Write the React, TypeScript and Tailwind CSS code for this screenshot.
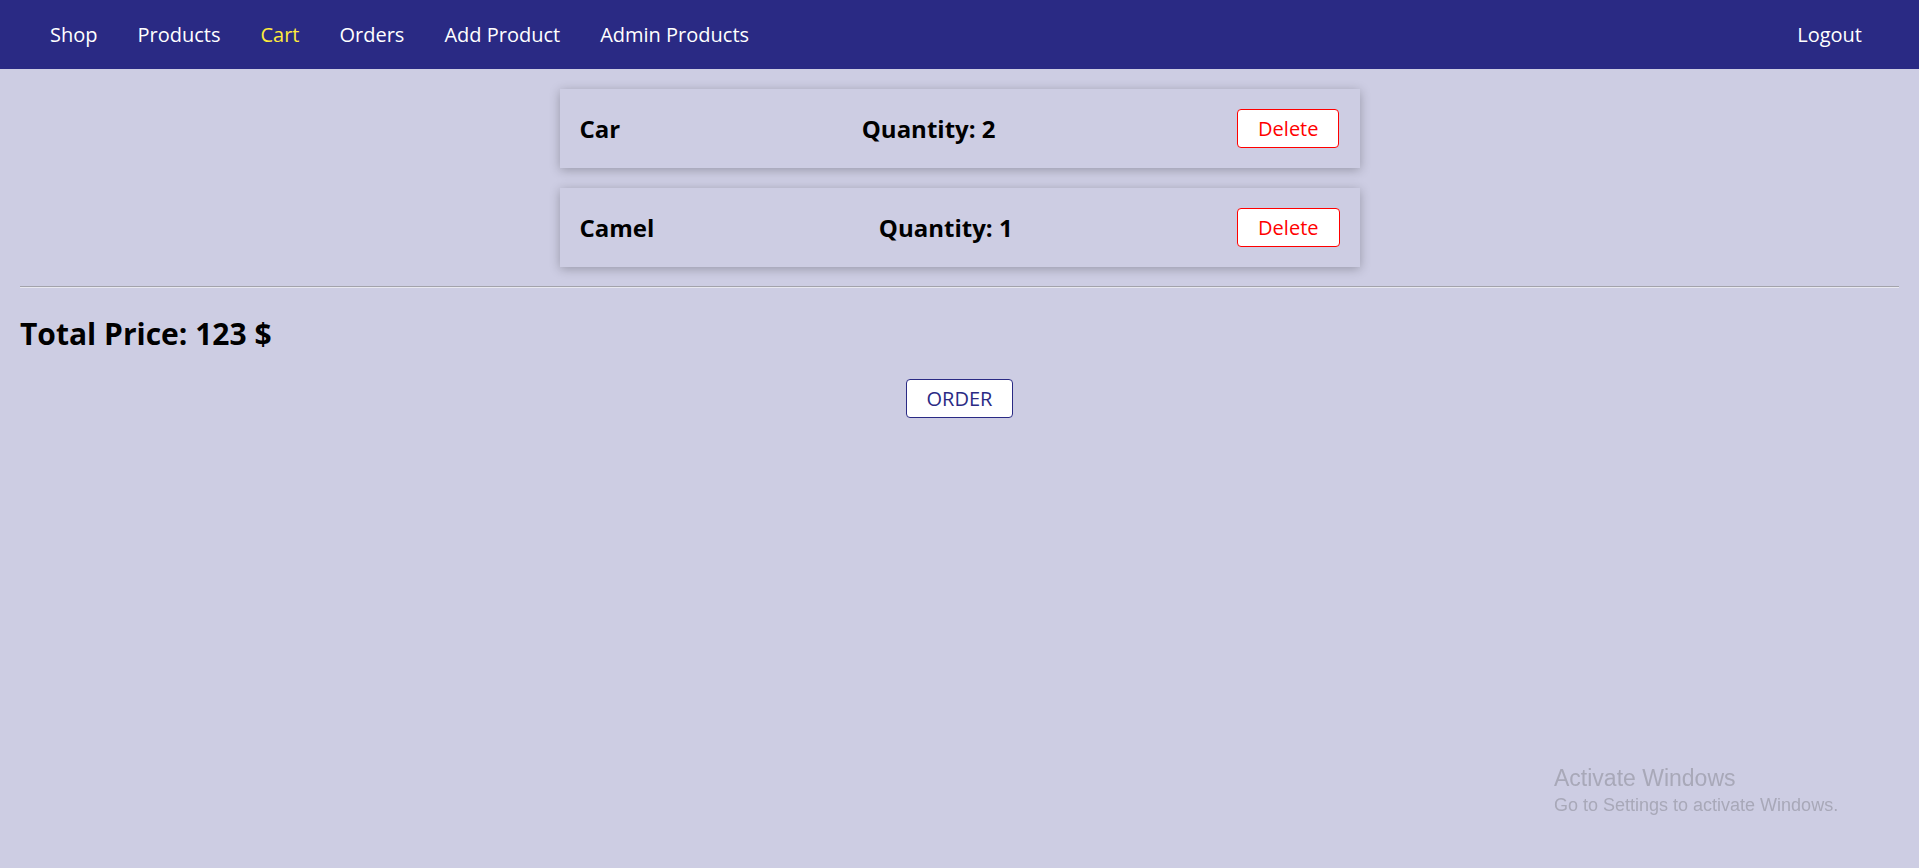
import React from 'react';

const navItems = [
    { label: 'Shop', active: false },
    { label: 'Products', active: false },
    { label: 'Cart', active: true },
    { label: 'Orders', active: false },
    { label: 'Add Product', active: false },
    { label: 'Admin Products', active: false },
];

const cartItems = [
    { title: 'Car', quantity: 2 },
    { title: 'Camel', quantity: 1 },
];

export default function App() {
    return (
        <div className="min-h-screen bg-[#cdcde3] font-['Open_Sans',sans-serif] text-black">
            {/* Header */}
            <header className="h-[69px] bg-[#2a2a84] pl-[30px] pr-[37px] flex items-center justify-between">
                <nav>
                    <ul className="flex items-center">
                        {navItems.map((item) => (
                            <li key={item.label} className="mx-[20px]">
                                <a
                                    href="#"
                                    className={`text-[20px] leading-[27px] ${item.active ? 'text-[#ffeb3b]' : 'text-white'}`}
                                >
                                    {item.label}
                                </a>
                            </li>
                        ))}
                    </ul>
                </nav>
                <ul className="flex items-center">
                    <li className="mx-[20px]">
                        <button className="text-[20px] leading-[27px] text-white">Logout</button>
                    </li>
                </ul>
            </header>

            <main className="p-[20px]">
                {/* Cart list */}
                <ul className="w-[800px] mx-auto flex flex-col gap-[20px]">
                    {cartItems.map((item) => (
                        <li
                            key={item.title}
                            className="flex items-center justify-between p-[20px] shadow-[0_2px_10px_rgba(0,0,0,0.26)]"
                        >
                            <h1 className="text-[24px] font-bold leading-[33px]">{item.title}</h1>
                            <h2 className="text-[24px] font-bold leading-[33px]">Quantity: {item.quantity}</h2>
                            <button className="bg-white text-[#ff0000] border border-[#ff0000] rounded-[4px] px-[20px] py-[5px] text-[20px] leading-[27px]">
                                Delete
                            </button>
                        </li>
                    ))}
                </ul>

                <hr className="mt-[19px] h-0 border-t border-t-[#a3a3ab] border-b border-b-[#e8e8f0]" />

                <h2 className="my-[25px] text-[30px] font-bold leading-[41px]">Total Price: 123 $</h2>

                <div className="flex justify-center">
                    <button className="bg-white text-[#2a2a84] border border-[#2a2a84] rounded-[4px] px-[20px] py-[5px] text-[20px] leading-[27px]">
                        ORDER
                    </button>
                </div>
            </main>

            {/* Windows watermark */}
            <div className="fixed left-[1554px] top-[764px] text-[#a8a8b8] font-['Liberation_Sans',sans-serif] pointer-events-none">
                <div className="text-[23px] leading-[29px]">Activate Windows</div>
                <div className="text-[18px] leading-[22px] mt-[1px]">Go to Settings to activate Windows.</div>
            </div>
        </div>
    );
}
